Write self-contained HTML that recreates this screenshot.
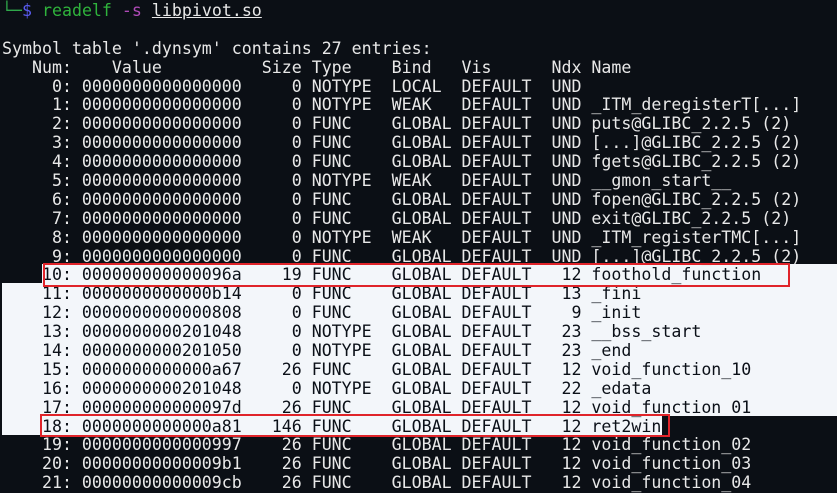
<!DOCTYPE html>
<html><head><meta charset="utf-8"><style>
html,body{margin:0;padding:0;background:#0b0f15;width:837px;height:489px;overflow:hidden}
.t{position:absolute;left:2px;top:2px;font-family:"DejaVu Sans Mono","Liberation Mono",monospace;font-size:16.6px;line-height:18.9px;color:#e8e8e8}
.l{height:18.9px;position:relative;white-space:pre}
.hl{position:absolute;background:#f3f6fa}
.box{position:absolute;border:2px solid #e0242a;box-sizing:border-box}
.d{color:#0b1018}
</style></head><body>
<div class="hl" style="left:42px;top:264px;width:795px;height:20px"></div>
<div class="hl" style="left:2px;top:283px;width:835px;height:133px"></div>
<div class="hl" style="left:2px;top:415px;width:660px;height:20px"></div>
<div class="t"><div class="l"><span style="color:#2fa84a">└─</span><span style="color:#5a5cf0">$</span> <span style="color:#2fb33c">readelf</span> <span style="color:#b04ab8">-s</span> <span style="text-decoration:underline">libpivot.so</span></div><div class="l"> </div><div class="l">Symbol table '.dynsym' contains 27 entries:</div><div class="l">   Num:    Value          Size Type    Bind   Vis      Ndx Name</div><div class="l">     0: 0000000000000000     0 NOTYPE  LOCAL  DEFAULT  UND </div><div class="l">     1: 0000000000000000     0 NOTYPE  WEAK   DEFAULT  UND _ITM_deregisterT[...]</div><div class="l">     2: 0000000000000000     0 FUNC    GLOBAL DEFAULT  UND puts@GLIBC_2.2.5 (2)</div><div class="l">     3: 0000000000000000     0 FUNC    GLOBAL DEFAULT  UND [...]@GLIBC_2.2.5 (2)</div><div class="l">     4: 0000000000000000     0 FUNC    GLOBAL DEFAULT  UND fgets@GLIBC_2.2.5 (2)</div><div class="l">     5: 0000000000000000     0 NOTYPE  WEAK   DEFAULT  UND __gmon_start__</div><div class="l">     6: 0000000000000000     0 FUNC    GLOBAL DEFAULT  UND fopen@GLIBC_2.2.5 (2)</div><div class="l">     7: 0000000000000000     0 FUNC    GLOBAL DEFAULT  UND exit@GLIBC_2.2.5 (2)</div><div class="l">     8: 0000000000000000     0 NOTYPE  WEAK   DEFAULT  UND _ITM_registerTMC[...]</div><div class="l">     9: 0000000000000000     0 FUNC    GLOBAL DEFAULT  UND [...]@GLIBC_2.2.5 (2)</div><div class="l d">    10: 000000000000096a    19 FUNC    GLOBAL DEFAULT   12 foothold_function</div><div class="l d">    11: 0000000000000b14     0 FUNC    GLOBAL DEFAULT   13 _fini</div><div class="l d">    12: 0000000000000808     0 FUNC    GLOBAL DEFAULT    9 _init</div><div class="l d">    13: 0000000000201048     0 NOTYPE  GLOBAL DEFAULT   23 __bss_start</div><div class="l d">    14: 0000000000201050     0 NOTYPE  GLOBAL DEFAULT   23 _end</div><div class="l d">    15: 0000000000000a67    26 FUNC    GLOBAL DEFAULT   12 void_function_10</div><div class="l d">    16: 0000000000201048     0 NOTYPE  GLOBAL DEFAULT   22 _edata</div><div class="l d">    17: 000000000000097d    26 FUNC    GLOBAL DEFAULT   12 void_function_01</div><div class="l d">    18: 0000000000000a81   146 FUNC    GLOBAL DEFAULT   12 ret2win</div><div class="l">    19: 0000000000000997    26 FUNC    GLOBAL DEFAULT   12 void_function_02</div><div class="l">    20: 00000000000009b1    26 FUNC    GLOBAL DEFAULT   12 void_function_03</div><div class="l">    21: 00000000000009cb    26 FUNC    GLOBAL DEFAULT   12 void_function_04</div></div>
<div class="box" style="left:43px;top:263px;width:747px;height:24px"></div>
<div class="box" style="left:40px;top:414px;width:630px;height:23px"></div>
</body></html>
